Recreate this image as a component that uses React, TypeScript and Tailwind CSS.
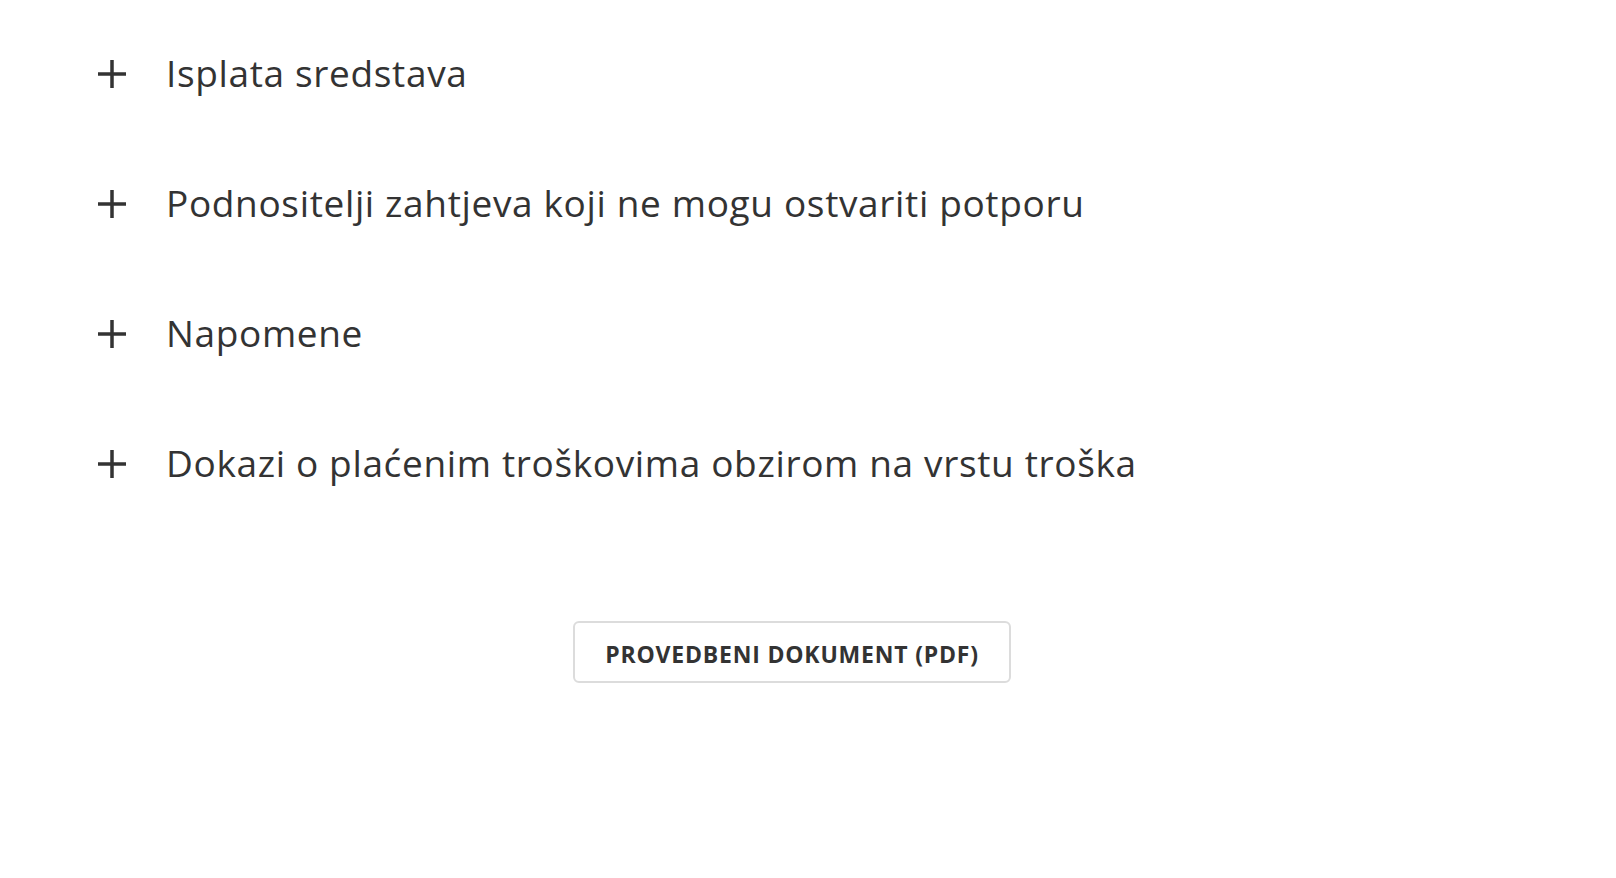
const items = [
  "Isplata sredstava",
  "Podnositelji zahtjeva koji ne mogu ostvariti potporu",
  "Napomene",
  "Dokazi o plaćenim troškovima obzirom na vrstu troška",
];

function PlusIcon() {
  return (
    <svg width="28" height="28" viewBox="0 0 28 28" className="shrink-0">
      <path d="M14 0v28M0 14h28" stroke="#333333" strokeWidth="3.5" />
    </svg>
  );
}

export default function App() {
  return (
    <div className="min-h-screen bg-white font-['Open_Sans',sans-serif] text-[#333333]">
      <div className="w-[1388px] ml-[98px] pt-[9px]">
        {items.map((label) => (
          <button
            key={label}
            className="flex h-[130px] w-full items-center gap-[40px] text-left"
          >
            <PlusIcon />
            <span className="pb-[4px] text-[37px] leading-none tracking-[0.65px]">{label}</span>
          </button>
        ))}
        <div className="mt-[92px] flex justify-center">
          <a
            href="#"
            className="flex h-[62px] w-[438px] items-center justify-center rounded-[6px] border-2 border-[#dcdcdc] pt-[5px] text-[23px] font-bold tracking-[0.8px]"
          >
            PROVEDBENI DOKUMENT (PDF)
          </a>
        </div>
      </div>
    </div>
  );
}
